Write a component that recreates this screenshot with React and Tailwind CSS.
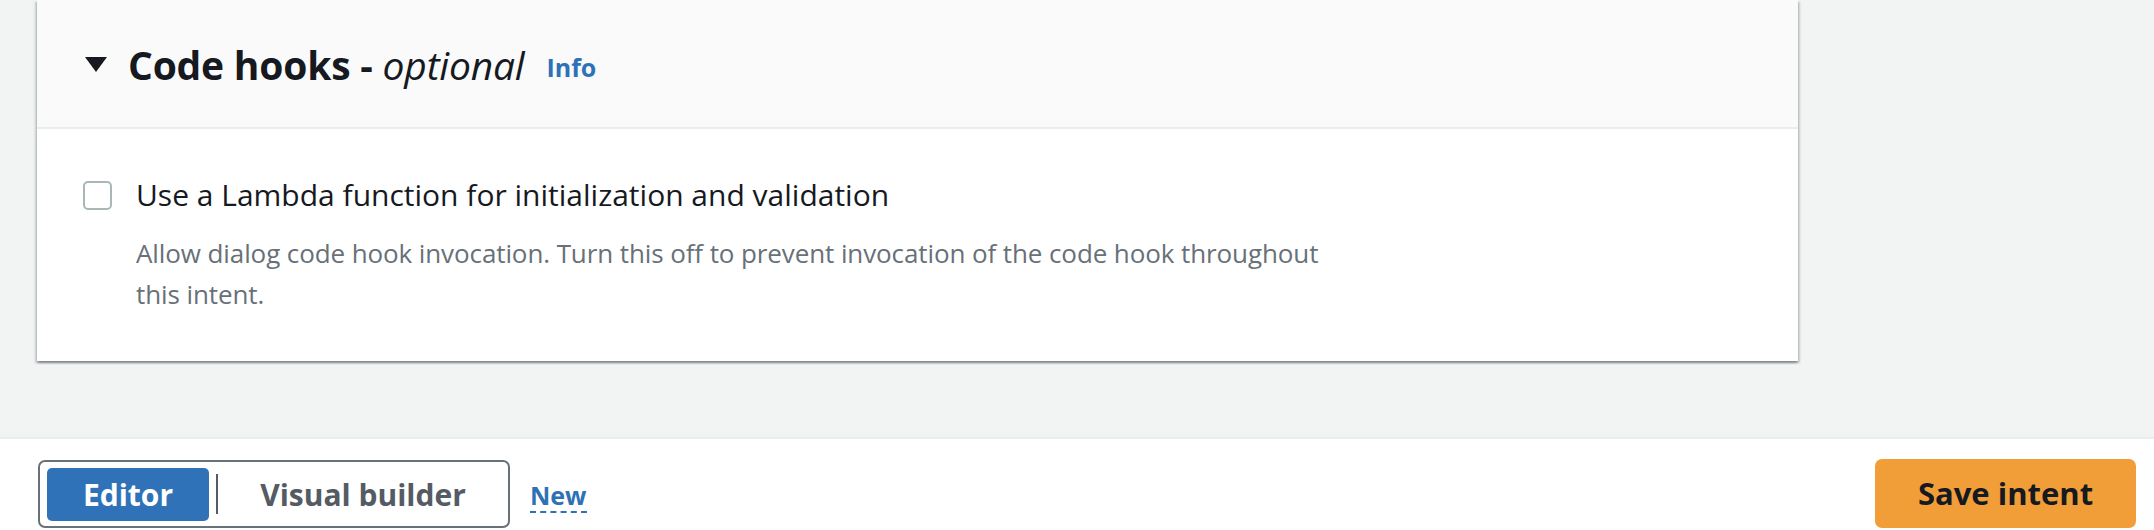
import React from "react";

function CaretDown() {
    return (
        <svg width="22" height="16" viewBox="0 0 22 16" className="shrink-0">
            <polygon points="0,0 22,0 11,15" fill="#16191f" />
        </svg>
    );
}

function CodeHooksCard() {
    return (
        <div className="w-[1761px] h-[361px] bg-white shadow-[0_2px_2px_0_rgba(0,28,36,0.3),2px_2px_2px_0_rgba(0,28,36,0.15),-2px_2px_2px_0_rgba(0,28,36,0.15)] flex flex-col">
            <div className="h-[129px] shrink-0 bg-[#fafafa] border-b-2 border-[#eaeded] flex items-center pl-[48px] pt-[2px]">
                <CaretDown />
                <h2 className="ml-[21px] text-[39px] tracking-[-0.2px] leading-[48px] text-[#16191f]">
                    <span className="font-bold">Code hooks - </span>
                    <span className="italic">optional</span>
                </h2>
                <span className="ml-[22px] mt-[6px] text-[25px] font-bold text-[#2f71b5]">Info</span>
            </div>
            <div className="pt-[48px] pl-[46px]">
                <label className="flex items-center">
                    <span className="w-[29px] h-[29px] rounded-[5px] border-2 border-[#aab7b8] bg-white shrink-0" />
                    <span className="ml-[24px] text-[30px] leading-[36px] text-[#16191f]">
                        Use a Lambda function for initialization and validation
                    </span>
                </label>
                <div className="ml-[53px] mt-[20px] text-[26px] tracking-[-0.1px] leading-[41px] text-[#687078]">
                    <div className="whitespace-nowrap">
                        Allow dialog code hook invocation. Turn this off to prevent invocation of the code hook throughout
                    </div>
                    <div className="whitespace-nowrap">this intent.</div>
                </div>
            </div>
        </div>
    );
}

function Footer() {
    return (
        <div className="h-[93px] bg-white border-t-2 border-[#eaeded] flex items-start justify-between pl-[38px] pr-[18px] pt-[21px]">
            <div className="flex items-center">
                <div className="h-[68px] w-[472px] border-2 border-[#687078] rounded-[7px] flex items-center pl-[7px]">
                    <div className="w-[162px] h-[53px] rounded-[5px] bg-[#3072b8] text-white text-[30px] font-bold flex items-center justify-center">
                        Editor
                    </div>
                    <div className="ml-[7px] w-[2px] h-[40px] bg-[#545b64]" />
                    <div className="w-[290px] h-[53px] text-[#545b64] text-[30px] font-bold flex items-center justify-center">
                        Visual builder
                    </div>
                </div>
                <span className="ml-[20px] mt-[4px] text-[25px] font-bold text-[#2f71b5] border-b-2 border-dashed border-[#2f71b5] leading-[32px]">
                    New
                </span>
            </div>
            <button className="h-[69px] w-[261px] rounded-[7px] bg-[#f19e39] text-[#16191f] text-[31px] font-bold -mt-px">
                Save intent
            </button>
        </div>
    );
}

export default function App() {
    return (
        <div className="w-[2154px] h-[530px] overflow-hidden bg-[#f2f3f3] flex flex-col font-['Open_Sans',sans-serif]">
            <div className="h-[437px] shrink-0 pl-[37px]">
                <CodeHooksCard />
            </div>
            <Footer />
        </div>
    );
}
